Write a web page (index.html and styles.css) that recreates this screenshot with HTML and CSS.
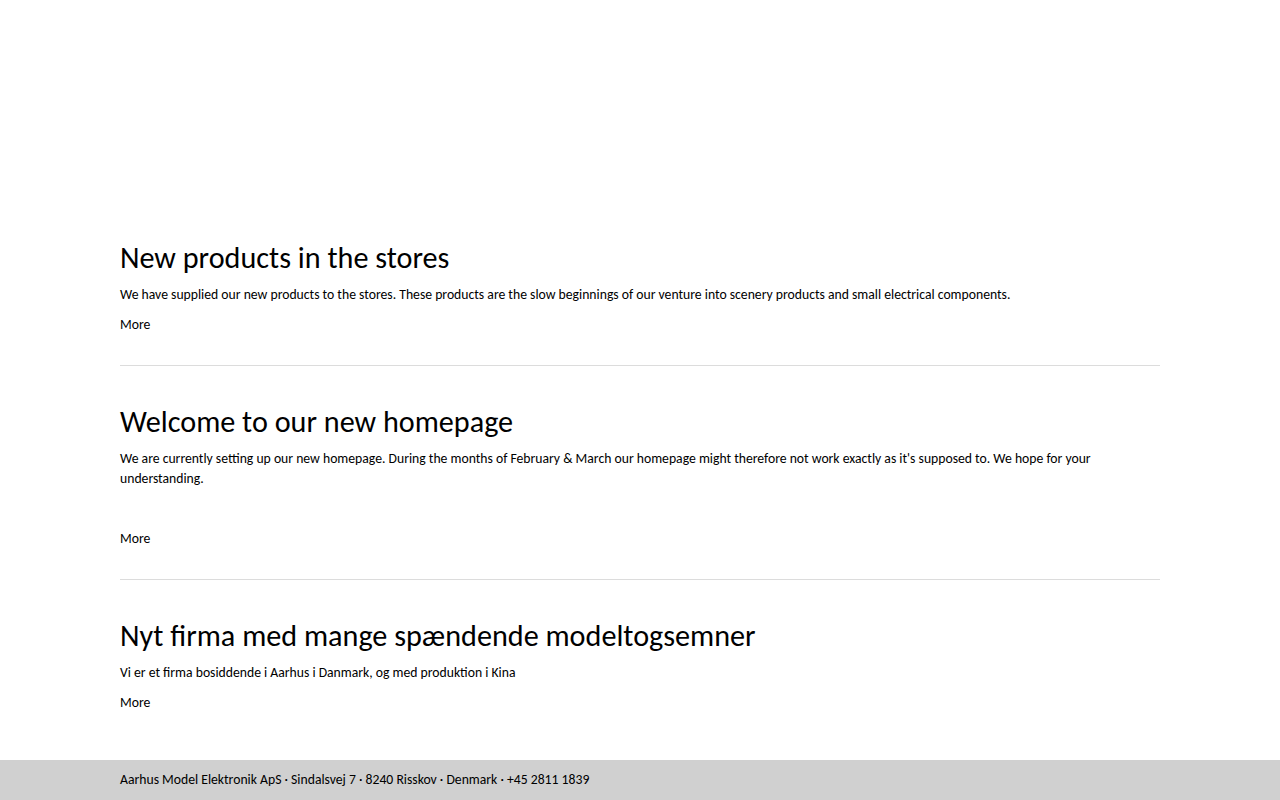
FILE: index.html
```html
<!DOCTYPE html>
<html lang="en">
<head>
<meta charset="utf-8">
<title>Aarhus Model Elektronik</title>
<link rel="stylesheet" href="styles.css">
</head>
<body>
<header class="site-header"></header>
<main class="news">
  <article class="post">
    <h2 class="post-title">New products in the stores</h2>
    <p class="post-text">We have supplied our new products to the stores. These products are the slow beginnings of our venture into scenery products and small electrical components.</p>
    <p class="post-more"><a href="#">More</a></p>
  </article>
  <article class="post">
    <h2 class="post-title">Welcome to our new homepage</h2>
    <p class="post-text">We are currently setting up our new homepage. During the months of February &amp; March our homepage might therefore not work exactly as it's supposed to. We hope for your understanding.</p>
    <p class="post-text">&nbsp;</p>
    <p class="post-more"><a href="#">More</a></p>
  </article>
  <article class="post post-last">
    <h2 class="post-title">Nyt firma med mange spændende modeltogsemner</h2>
    <p class="post-text">Vi er et firma bosiddende i Aarhus i Danmark, og med produktion i Kina</p>
    <p class="post-more"><a href="#">More</a></p>
  </article>
</main>
<footer class="site-footer">
  <div class="footer-inner">Aarhus Model Elektronik ApS · Sindalsvej 7 · 8240 Risskov · Denmark · +45 2811 1839</div>
</footer>
</body>
</html>
```
FILE: styles.css
```css
html, body {
  margin: 0;
  padding: 0;
}
body {
  font-family: Carlito, Calibri, "Open Sans", "Liberation Sans", sans-serif;
  color: #000;
  background: #fff;
  font-size: 13.7px;
  line-height: 20px;
}
.site-header {
  height: 202px;
}
.news {
  width: 1040px;
  margin: 0 auto;
  padding-bottom: 17px;
}
.post {
  padding: 38px 0 20px;
  border-bottom: 1px solid #dcdcdc;
}
.post-last {
  border-bottom: none;
}
.post-title {
  font-size: 30.2px;
  line-height: 36px;
  font-weight: normal;
  margin: 0 0 9px;
}
.post-text,
.post-more {
  margin: 0 0 10px;
}
.post-more a {
  color: #000;
  text-decoration: none;
}
.site-footer {
  background: #d0d0d0;
  height: 40px;
  display: flex;
  align-items: center;
}
.footer-inner {
  width: 1040px;
  margin: 0 auto;
}
```
